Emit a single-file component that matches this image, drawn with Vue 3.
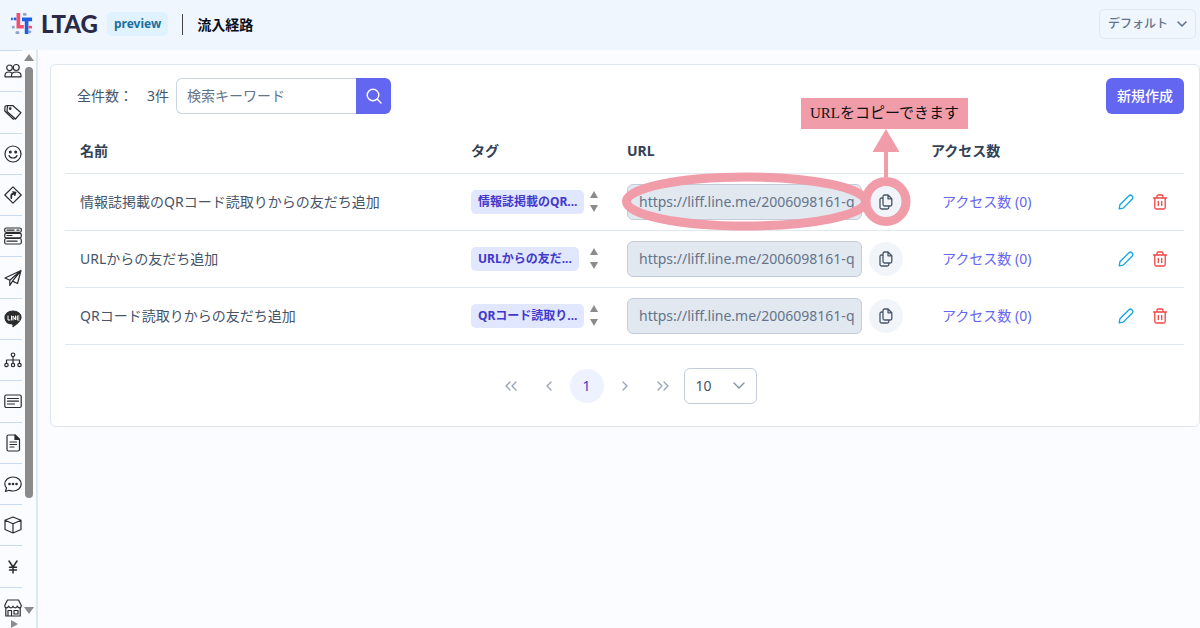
<script setup>
import { ref } from 'vue'

const keyword = ref('')
const pageSize = ref('10')
const url = 'https://liff.line.me/2006098161-q'

const rows = [
  { id: 1, name: '情報誌掲載のQRコード読取りからの友だち追加', tag: '情報誌掲載のQR...', access: 0, guide: true },
  { id: 2, name: 'URLからの友だち追加', tag: 'URLからの友だ...', access: 0 },
  { id: 3, name: 'QRコード読取りからの友だち追加', tag: 'QRコード読取り...', access: 0 }
]

const menu = [
  { label: '友だち', icon: 'users' },
  { label: 'タグ', icon: 'tag' },
  { label: 'スタンプ', icon: 'smile' },
  { label: '流入経路', icon: 'route' },
  { label: 'リッチメニュー', icon: 'rows' },
  { label: '配信', icon: 'send' },
  { label: 'LINE', icon: 'line' },
  { label: 'シナリオ', icon: 'tree' },
  { label: 'テンプレート', icon: 'card' },
  { label: 'フォーム', icon: 'doc' },
  { label: 'チャット', icon: 'chat' },
  { label: '商品', icon: 'box' },
  { label: '決済', icon: 'yen' },
  { label: '店舗', icon: 'shop' }
]
</script>

<template>
  <div class="page">
    <header class="topbar">
      <svg class="mark" viewBox="0 0 24 24" aria-hidden="true">
        <g fill="#8fa3cf">
          <rect x="1" y="14" width="3" height="3" rx="1" /><rect x="13" y="0" width="4" height="3" rx="1" />
          <rect x="5" y="20" width="4" height="3" rx="1" /><rect x="19" y="19" width="3" height="3" rx="1" />
        </g>
        <g fill="#1f5fe0">
          <rect x="0" y="5" width="2" height="3" rx="1" /><rect x="3" y="5" width="3" height="3" rx="1" />
          <path d="M12 5h11v4h-4v14h-4V9h-3z" />
        </g>
        <path d="M6 0h4v13h4v4H6z" fill="#f2506e" />
        <g fill="#f2506e"><rect x="19" y="14" width="4" height="3" rx="1" /></g>
      </svg>
      <span class="brand">LTAG</span>
      <span class="preview">preview</span>
      <h1>流入経路</h1>
      <button class="account" type="button">
        デフォルト
        <svg width="10" height="10" viewBox="0 0 10 10" aria-hidden="true"><path d="M1 3l4 4 4-4" /></svg>
      </button>
    </header>

    <div class="body">
      <aside class="side">
        <nav>
          <a v-for="m in menu" :key="m.icon" href="#" :aria-label="m.label">
            <svg viewBox="0 0 18 18" aria-hidden="true">
              <g v-if="m.icon === 'users'">
                <circle cx="5.5" cy="5.8" r="2.8" /><circle cx="12.2" cy="5.5" r="3" />
                <path d="M7 14.8H1v-1.500c0-2 1.500-3.300 4-3.300 1 0 1.700.2 2.300.6M7.500 14.800v-1.300c0-2.200 1.700-3.500 4.700-3.500s4.800 1.300 4.800 3.500v1.300z" />
              </g>
              <g v-else-if="m.icon === 'tag'">
                <path d="M3.500 2.500l5.500.2 8 7-5.500 6.300L3 8.500z" /><path d="M3.300 2.500L1 3.300.8 8l8.500 8.200 1.500-.7" /><circle class="solid" cx="6.200" cy="5.600" r=".8" />
              </g>
              <g v-else-if="m.icon === 'smile'">
                <circle cx="9" cy="9" r="8" /><path d="M5 10.500c1 3.300 7 3.300 8 0" /><circle class="solid" cx="6.300" cy="7" r=".9" /><circle class="solid" cx="11.700" cy="7" r=".9" />
              </g>
              <g v-else-if="m.icon === 'route'">
                <path d="M9 .8L17.200 9 9 17.200.8 9z" /><path class="bold" d="M7.300 12V9.800c0-1.200.5-1.800 1.500-1.800" /><path class="solid" d="M8.800 5.800l3 .6-1 3.100z" />
              </g>
              <g v-else-if="m.icon === 'rows'">
                <rect x=".7" y="1" width="16.600" height="4.300" rx="1.500" /><rect x=".7" y="6.300" width="16.600" height="4.500" rx="1.500" /><rect x=".7" y="11.500" width="16.600" height="5.500" rx="1.500" />
                <path d="M3 3.200h7M13 3.200h2M3 8.500h5M3 14.200h10" />
              </g>
              <g v-else-if="m.icon === 'send'">
                <path d="M17 1.500L1 9l4.800 2.300L17 1.500zM17 1.500l-3.500 13-5-2.400L17 1.500zM5.800 11.300v5.200l2.700-4.400" />
              </g>
              <g v-else-if="m.icon === 'line'">
                <path class="solid" d="M9 1c4.700 0 8 3 8 6.500 0 3.700-4.500 6.500-8 9.200.3-1.200.4-2.300-.5-2.700C4 13.700 1 11.200 1 7.500 1 4 4.300 1 9 1z" />
                <path class="white" d="M4 6v4h2M7.500 6v4M9 10V6l2.500 4V6M15 6h-1.800v4H15M13.200 8H15" />
              </g>
              <g v-else-if="m.icon === 'tree'">
                <circle cx="9" cy="3.800" r="1.800" /><circle cx="2.500" cy="14" r="1.700" /><circle cx="9" cy="14" r="1.700" /><circle cx="15.500" cy="14" r="1.700" />
                <path d="M9 5.600v6.700M2.500 12.300V9h13v3.300" />
              </g>
              <g v-else-if="m.icon === 'card'">
                <rect x=".8" y="3" width="16.400" height="12.500" rx="1.500" /><path d="M3.500 6.500h11M3.500 9.200h11M3.500 12h7" />
              </g>
              <g v-else-if="m.icon === 'doc'">
                <path d="M3 2.500C3 1.500 3.500 1 4.500 1H11l4.500 4.500v10c0 1-.5 1.500-1.500 1.500H4.500C3.500 17 3 16.500 3 15.500z" /><path class="solid" d="M11 1v4.500h4.500z" /><path d="M6 8h6.500M6 10.500h6.500M6 13h4" />
              </g>
              <g v-else-if="m.icon === 'chat'">
                <path d="M9 2c4.500 0 8.200 3 8.200 7s-3.700 7-8.200 7c-1.500 0-2.800-.3-4-.8L1.500 16.500l1-3.500C1.500 12 .8 10.500.8 9c0-4 3.700-7 8.200-7z" /><circle class="solid" cx="5.500" cy="9" r=".7" /><circle class="solid" cx="9" cy="9" r=".7" /><circle class="solid" cx="12.500" cy="9" r=".7" />
              </g>
              <g v-else-if="m.icon === 'box'">
                <path d="M9 1l8 3.200v9.300L9 17l-8-3.500V4.200zM1 4.200l8 3.500 8-3.500M9 7.700V17" />
              </g>
              <g v-else-if="m.icon === 'yen'">
                <path class="yen" d="M5 3l4 6 4-6M9 9v6M5.500 9.300h7M5.500 12h7" />
              </g>
              <g v-else>
                <path d="M3.500 1h11L17.300 6.500c0 3-3 3-4.100.5-.5 2.500-3.700 2.500-4.200 0-.5 2.500-3.700 2.500-4.200 0C3.700 9.500.7 9.500.7 6.500zM1.800 9v8h14.400V9M4 17v-5.500h3.500V17M10 11.500h4v3.500h-4z" />
              </g>
            </svg>
          </a>
        </nav>
        <div class="scroll" aria-hidden="true">
          <i class="tri up"></i>
          <i class="thumb"></i>
          <i class="tri down"></i>
        </div>
        <i class="tri right" aria-hidden="true"></i>
      </aside>

      <main>
        <section class="panel">
          <div class="toolbar">
            <span class="total">全件数：</span>
            <span class="count">3件</span>
            <form class="search" @submit.prevent>
              <input v-model="keyword" type="text" placeholder="検索キーワード" aria-label="検索キーワード" />
              <button type="submit" aria-label="検索">
                <svg width="16" height="16" viewBox="0 0 16 16" aria-hidden="true"><circle cx="7" cy="7" r="5.800" /><path d="M11.300 11.300L15 15" /></svg>
              </button>
            </form>
            <button class="create" type="button">新規作成</button>
          </div>

          <table>
            <thead>
              <tr>
                <th>名前</th>
                <th class="c-tag">タグ</th>
                <th class="c-url">URL</th>
                <th class="c-access">アクセス数</th>
                <th class="c-act" aria-label="操作"></th>
              </tr>
            </thead>
            <tbody>
              <tr v-for="r in rows" :key="r.id">
                <td>{{ r.name }}</td>
                <td>
                  <div class="tags">
                    <span class="tag">{{ r.tag }}</span>
                    <span class="spin" aria-hidden="true"><i class="tri up"></i><i class="tri down"></i></span>
                  </div>
                </td>
                <td>
                  <div class="link">
                    <input type="text" readonly :value="url" :aria-label="r.name + 'のURL'" />
                    <button type="button" aria-label="URLをコピー">
                      <svg width="14" height="16" viewBox="0 0 14 16" aria-hidden="true">
                        <path d="M9 1H5.500C4.700 1 4 1.700 4 2.500v8c0 .8.700 1.500 1.500 1.500h5.800c.8 0 1.500-.7 1.500-1.500V4.800zM9 1v3.800h3.800M4 4H2.500C1.700 4 1 4.700 1 5.500v8c0 .8.700 1.500 1.500 1.500h5.800c.8 0 1.500-.7 1.500-1.500V12" />
                      </svg>
                    </button>
                    <template v-if="r.guide">
                      <svg class="guide" width="292" height="106" viewBox="0 0 292 106" aria-hidden="true">
                        <ellipse cx="127" cy="76.500" rx="119.500" ry="24.500" />
                        <circle cx="267" cy="76.500" r="20" />
                        <path d="M267 52V20" />
                        <path class="head" d="M267 4l13.500 23h-27z" />
                      </svg>
                      <span class="note">URLをコピーできます</span>
                    </template>
                  </div>
                </td>
                <td><a class="access" href="#">アクセス数 ({{ r.access }})</a></td>
                <td>
                  <div class="acts">
                    <button class="edit" type="button" aria-label="編集">
                      <svg width="16" height="16" viewBox="0 0 16 16" aria-hidden="true"><path d="M1.200 14.800l.7-4L11 1.700c.8-.8 2-.8 2.800 0l.5.500c.8.8.8 2 0 2.800L5.200 14.100z" /></svg>
                    </button>
                    <button class="del" type="button" aria-label="削除">
                      <svg width="16" height="16" viewBox="0 0 16 16" aria-hidden="true"><path d="M1.500 4h13M5 4V2.200C5 1.500 5.500 1 6.200 1h3.600c.7 0 1.200.5 1.200 1.200V4M2.800 4v9.500c0 .8.700 1.500 1.500 1.500h7.400c.8 0 1.500-.7 1.500-1.500V4M6.300 7.500v4M9.700 7.500v4" /></svg>
                    </button>
                  </div>
                </td>
              </tr>
            </tbody>
          </table>

          <div class="pager">
            <button type="button" aria-label="最初のページ"><svg width="12" height="10" viewBox="0 0 12 10" aria-hidden="true"><path d="M5 1L1 5l4 4M11 1L7 5l4 4" /></svg></button>
            <button type="button" aria-label="前のページ"><svg width="6" height="10" viewBox="0 0 6 10" aria-hidden="true"><path d="M5 1L1 5l4 4" /></svg></button>
            <button class="current" type="button">1</button>
            <button type="button" aria-label="次のページ"><svg width="6" height="10" viewBox="0 0 6 10" aria-hidden="true"><path d="M1 1l4 4-4 4" /></svg></button>
            <button type="button" aria-label="最後のページ"><svg width="12" height="10" viewBox="0 0 12 10" aria-hidden="true"><path d="M1 1l4 4-4 4M7 1l4 4-4 4" /></svg></button>
            <div class="size">
              <select v-model="pageSize" aria-label="表示件数">
                <option>10</option>
                <option>20</option>
                <option>50</option>
              </select>
              <svg width="12" height="8" viewBox="0 0 12 8" aria-hidden="true"><path d="M1 1l5 5 5-5" /></svg>
            </div>
          </div>
        </section>
      </main>
    </div>
  </div>
</template>

<style>
body {
  margin: 0;
  background: #fafcff;
}
</style>

<style scoped>
* {
  box-sizing: border-box;
}
.page {
  display: flex;
  flex-direction: column;
  min-height: 100vh;
  font-family: "Noto Sans", "Noto Sans CJK JP", sans-serif;
  font-size: 14px;
  line-height: 20px;
  color: #475569;
}
button,
input,
select {
  font: inherit;
  color: inherit;
  margin: 0;
  padding: 0;
  border: 0;
  background: none;
}
svg {
  display: block;
  fill: none;
  stroke: currentColor;
  stroke-linecap: round;
  stroke-linejoin: round;
}
.topbar {
  display: flex;
  align-items: center;
  height: 50px;
  padding: 0 4px 2px 11px;
  background: #eff6fe;
}
.mark {
  width: 22px;
  height: 24px;
  stroke: none;
}
.brand {
  margin-left: 8px;
  font-family: Lato, sans-serif;
  font-weight: 900;
  font-size: 24px;
  line-height: 24px;
  color: #2a2947;
}
.preview {
  margin-left: 9px;
  padding: 2px 7px;
  border-radius: 5px;
  background: #e0f2fe;
  color: #1a6f9f;
  font-weight: 700;
  font-size: 12px;
}
h1 {
  margin: 0 0 0 14px;
  padding-left: 14px;
  border-left: 1px solid #444;
  font-size: 14px;
  line-height: 21px;
  font-weight: 700;
  color: #0b0f19;
}
.account {
  display: flex;
  align-items: center;
  gap: 9px;
  height: 30px;
  margin-left: auto;
  padding: 0 8px;
  border: 1px solid #e2e8f0;
  border-radius: 5px;
  font-size: 12px;
  font-weight: 500;
  color: #64748b;
}
.account svg {
  stroke-width: 1.6;
}
.body {
  display: flex;
  flex: 1;
}
.side {
  position: relative;
  display: flex;
  flex: none;
  width: 38px;
  border-right: 2px solid #dbe8f8;
}
nav {
  display: grid;
  grid-auto-rows: 1fr;
  width: 22px;
}
nav a {
  display: flex;
  align-items: center;
  padding-left: 4px;
  border-top: 1px solid #c9dbee;
  color: #2b2b2b;
}
nav svg {
  width: 18px;
  height: 18px;
  stroke-width: 1.2;
}
nav .solid {
  fill: currentColor;
}
nav .bold {
  stroke-width: 1.8;
}
nav .yen {
  stroke-width: 1.5;
}
nav .white {
  stroke: #fff;
  stroke-width: 1;
}
.scroll {
  display: flex;
  flex-direction: column;
  align-items: center;
  width: 14px;
  padding: 4px 0 14px;
}
.thumb {
  width: 8px;
  height: 77%;
  margin: 6px 0 auto;
  border-radius: 4px;
  background: #8b8b8b;
}
.tri {
  border: 0 solid transparent;
}
.tri.up {
  border-width: 0 5px 7px;
  border-bottom-color: #8b8b8b;
}
.tri.down {
  border-width: 7px 5px 0;
  border-top-color: #8b8b8b;
}
.tri.right {
  position: absolute;
  left: 11px;
  bottom: 0;
  border-width: 4px 0 4px 7px;
  border-left-color: #8b8b8b;
}
main {
  flex: 1;
  min-width: 0;
  padding: 14px 0 0 12px;
}
.panel {
  padding: 13px 15px 22px 14px;
  border: 1px solid #dfe6ee;
  border-radius: 6px;
  background: #fff;
}
.toolbar {
  display: flex;
  align-items: center;
  height: 36px;
  padding-left: 12px;
}
.count {
  margin-left: 14px;
}
.search {
  display: flex;
  height: 36px;
  margin-left: 7px;
}
.search input {
  width: 180px;
  padding: 0 10px;
  border: 1px solid #cbd5e1;
  border-right: 0;
  border-radius: 6px 0 0 6px;
  background: #fff;
}
.search input::placeholder {
  color: #64748b;
}
.search button {
  display: grid;
  place-items: center;
  width: 35px;
  border-radius: 0 6px 6px 0;
  background: #6366f1;
  color: #fff;
}
.search svg {
  stroke-width: 1.4;
}
.create {
  height: 36px;
  margin-left: auto;
  padding: 0 11px;
  border-radius: 6px;
  background: #6366f1;
  color: #fff;
  font-weight: 500;
}
table {
  width: 100%;
  margin-top: 16px;
  border-collapse: collapse;
  table-layout: fixed;
}
th,
td {
  height: 57px;
  padding: 0 0 0 15px;
  border-bottom: 1px solid #e2e8f0;
  text-align: left;
  white-space: nowrap;
}
th {
  height: 43px;
  font-weight: 700;
  color: #334155;
}
.c-tag {
  width: 156px;
}
.c-url {
  width: 304px;
}
.c-access {
  width: 148px;
}
.c-act {
  width: 120px;
}
.tags {
  display: flex;
  align-items: center;
  justify-content: space-between;
  width: 127px;
}
.tag {
  padding: 2px 7px;
  border-radius: 5px;
  background: #e0e7ff;
  color: #4338ca;
  font-size: 12px;
  font-weight: 700;
}
.spin {
  display: flex;
  flex-direction: column;
  gap: 7px;
}
.spin .tri {
  border-left-width: 4px;
  border-right-width: 4px;
}
.link {
  position: relative;
  display: flex;
  align-items: center;
  gap: 7px;
}
.link input {
  width: 235px;
  height: 36px;
  padding: 0 4px 0 11px;
  border: 1px solid #c3ccd9;
  border-radius: 6px;
  background: #e2e8f0;
  color: #64748b;
}
.link button {
  display: grid;
  place-items: center;
  width: 34px;
  height: 34px;
  border-radius: 50%;
  background: #f1f5f9;
}
.link button svg {
  stroke-width: 1.3;
}
.guide {
  position: absolute;
  left: -8px;
  bottom: -11px;
  color: #f19ca9;
  stroke-width: 9;
  pointer-events: none;
}
.guide path {
  stroke-width: 4;
  stroke-linecap: butt;
}
.guide .head {
  fill: currentColor;
  stroke: none;
}
.note {
  position: absolute;
  left: 174px;
  bottom: 91px;
  padding: 0 9px;
  background: #f19ca9;
  color: #111;
  font-family: "Liberation Serif", "Noto Sans CJK JP", serif;
  font-size: 15px;
  font-weight: 400;
  line-height: 31px;
}
.access {
  padding-left: 11px;
  color: #6366f1;
  text-decoration: none;
}
.acts {
  display: flex;
  justify-content: flex-end;
  padding-right: 7px;
}
.acts button {
  display: grid;
  place-items: center;
  width: 34px;
  height: 34px;
}
.acts svg {
  stroke-width: 1.3;
}
.edit {
  color: #0ea5e9;
}
.del {
  color: #ef4444;
}
.pager {
  display: flex;
  align-items: center;
  justify-content: center;
  gap: 4px;
  margin-top: 23px;
  padding-left: 1px;
}
.pager button {
  display: grid;
  place-items: center;
  width: 34px;
  height: 34px;
  border-radius: 50%;
  color: #94a3b8;
}
.pager button svg {
  stroke-width: 1.3;
}
.pager .current {
  background: #eef2ff;
  color: #4338ca;
}
.size {
  position: relative;
  width: 73px;
}
.size select {
  display: block;
  width: 100%;
  height: 36px;
  padding: 0 11px;
  border: 1px solid #c3ccd9;
  border-radius: 6px;
  background: #fff;
  appearance: none;
}
.size svg {
  position: absolute;
  right: 12px;
  top: 14px;
  color: #7f92ab;
  stroke-width: 1.4;
  pointer-events: none;
}
</style>
